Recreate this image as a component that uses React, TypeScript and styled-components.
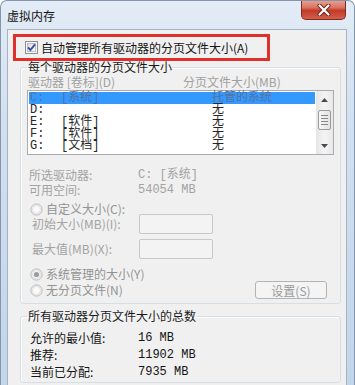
import React from 'react';
import styled, { createGlobalStyle } from 'styled-components';

const GlobalStyle = createGlobalStyle`
  html, body {
    margin: 0;
    padding: 0;
    background: #ffffff;
  }
  body {
    font-family: "Noto Sans CJK SC", "Noto Sans", sans-serif;
    font-size: 12px;
  }
`;

const Window = styled.div`
  box-sizing: border-box;
  width: 355px;
  height: 385px;
  overflow: hidden;
  display: flex;
  flex-direction: column;
  border: 1px solid #8396ae;
  border-bottom: none;
  border-radius: 7px 7px 0 0;
  background: linear-gradient(180deg, #e3ecf6 0%, #d3e0ef 30%, #c2d5ea 100%);
`;

const TitleBar = styled.div`
  height: 28px;
  flex: none;
  display: flex;
  align-items: flex-start;
  padding-left: 6px;
`;

const Title = styled.span`
  align-self: center;
  font-size: 12px;
  line-height: 14px;
  color: #111;
  margin-top: 1px;
`;

const CloseButton = styled.div`
  margin-left: auto;
  margin-right: 8px;
  margin-top: -1px;
  width: 45px;
  height: 20px;
  box-sizing: border-box;
  border: 1px solid #7d2a1f;
  border-top: none;
  border-radius: 0 0 5px 5px;
  background: linear-gradient(180deg, #eaa597 0%, #d9735f 40%, #c4382a 55%, #d2604a 100%);
  display: flex;
  align-items: center;
  justify-content: center;
`;

const Content = styled.div`
  flex: 1;
  margin: 0 7px 0 6px;
  background: #f0f0f0;
  border: 1px solid #a3b4c8;
  border-bottom: none;
  display: flex;
  flex-direction: column;
  align-items: flex-start;
`;

const Highlight = styled.div`
  box-sizing: border-box;
  margin: 4px 0 0 5px;
  width: 257px;
  height: 27px;
  border: 3px solid #e0302c;
  display: flex;
  align-items: center;
  gap: 3px;
  padding-left: 9px;
  position: relative;
  z-index: 1;
`;

const Label = styled.span<{ $tone?: 'dark' | 'mid' | 'light' }>`
  font-size: 12px;
  line-height: 14px;
  white-space: nowrap;
  color: ${(p) => (p.$tone === 'light' ? '#a3a3a3' : p.$tone === 'mid' ? '#939393' : '#141414')};
`;

const Group = styled.fieldset<{ $top: number }>`
  box-sizing: border-box;
  width: 321px;
  margin: ${(p) => p.$top}px 0 0 12px;
  padding: 0;
  border: 1px solid #d5dfe5;
  border-radius: 3px;
  box-shadow: inset 1px 1px 0 #ffffff;
  min-width: 0;
`;

const Legend = styled.legend`
  margin-left: 6px;
  padding: 0 1px;
  font-size: 12px;
  line-height: 14px;
  color: #1a1a1a;
`;

const HeaderRow = styled.div`
  display: grid;
  grid-template-columns: 155px 1fr;
  margin-top: 1px;
  padding-left: 7px;
  height: 14px;
  color: #a0a0a0;
  line-height: 14px;
`;

const ListBox = styled.div`
  box-sizing: border-box;
  margin: 1px 0 0 6px;
  width: 307px;
  height: 65px;
  border: 1px solid #a8abb2;
  background: #ffffff;
  display: flex;
`;

const Items = styled.div`
  flex: 1;
  padding-top: 1px;
  display: flex;
  flex-direction: column;
`;

const Row = styled.div<{ $selected?: boolean }>`
  display: grid;
  grid-template-columns: 31px 151px 1fr;
  margin-left: 1px;
  width: 286px;
  height: 12px;
  padding-left: 1px;
  box-sizing: border-box;
  font-family: "Liberation Mono", "Noto Sans CJK SC", monospace;
  font-size: 12px;
  line-height: 12px;
  white-space: nowrap;
  background: ${(p) => (p.$selected ? '#3399ff' : 'transparent')};
  color: ${(p) => (p.$selected ? '#55719e' : '#262626')};
`;

const ScrollBar = styled.div`
  width: 17px;
  flex: none;
  background: linear-gradient(90deg, #e6e6e6, #f3f3f3 50%, #e8e8e8);
  display: flex;
  flex-direction: column;
  align-items: center;
`;

const ArrowCell = styled.div`
  height: 17px;
  width: 17px;
  display: flex;
  align-items: center;
  justify-content: center;
`;

const Thumb = styled.div`
  box-sizing: border-box;
  margin-top: 2px;
  width: 13px;
  height: 20px;
  border: 1px solid #9c9c9c;
  border-radius: 2px;
  background: linear-gradient(90deg, #f7f7f7, #e2e2e2);
  display: flex;
  flex-direction: column;
  align-items: center;
  justify-content: center;
  gap: 2px;
`;

const Grip = styled.div`
  width: 7px;
  height: 1px;
  background: #8a8a8a;
`;

const Spacer = styled.div`
  flex: 1;
`;

const InfoGrid = styled.div<{ $top: number; $pad: number; $col: number; $line: number }>`
  display: grid;
  grid-template-columns: ${(p) => p.$col}px 1fr;
  grid-auto-rows: ${(p) => p.$line}px;
  align-items: center;
  margin-top: ${(p) => p.$top}px;
  padding-left: ${(p) => p.$pad}px;
`;

const Value = styled.span<{ $dim?: boolean }>`
  font-family: "Liberation Mono", "Noto Sans CJK SC", monospace;
  font-size: 12px;
  line-height: 14px;
  white-space: nowrap;
  color: ${(p) => (p.$dim ? '#a3a3a3' : '#141414')};
`;

const RadioRow = styled.div<{ $top: number }>`
  display: flex;
  align-items: center;
  gap: 3px;
  margin-top: ${(p) => p.$top}px;
  padding-left: 9px;
  padding-right: 13px;
  min-height: 13px;
`;

const SizeRow = styled.div<{ $top: number }>`
  display: grid;
  grid-template-columns: 107px 74px;
  align-items: center;
  margin-top: ${(p) => p.$top}px;
  padding-left: 11px;
  height: 20px;
`;

const SizeInput = styled.div`
  box-sizing: border-box;
  width: 74px;
  height: 20px;
  border: 1px solid #c8c8c8;
  border-radius: 2px;
  background: #f3f3f3;
`;

const Button = styled.div`
  box-sizing: border-box;
  margin-left: auto;
  width: 72px;
  height: 18px;
  border: 1px solid #b3b3b3;
  border-radius: 3px;
  background: #f4f4f4;
  color: #9a9a9a;
  font-size: 12px;
  display: flex;
  align-items: center;
  justify-content: center;
`;

const Checkbox = (): JSX.Element => (
  <svg width="13" height="13" viewBox="0 0 13 13">
    <defs>
      <linearGradient id="cbfill" x1="0" y1="0" x2="1" y2="1">
        <stop offset="0" stopColor="#dcdcdc" />
        <stop offset="1" stopColor="#ffffff" />
      </linearGradient>
    </defs>
    <rect x="0.5" y="0.5" width="12" height="12" fill="#f6f6f6" stroke="#8e8f8f" />
    <rect x="2.5" y="2.5" width="8" height="8" fill="url(#cbfill)" stroke="#b9bdc4" />
    <path d="M3 6.3 L5.4 9 L10 3.3" fill="none" stroke="#3c4ea5" strokeWidth="1.9" />
  </svg>
);

const Radio = ({ checked }: { checked?: boolean }): JSX.Element => (
  <svg width="13" height="13" viewBox="0 0 13 13">
    <circle cx="6.5" cy="6.5" r="5.6" fill="#f2f2f2" stroke="#b9b9b9" />
    <circle cx="6.5" cy="6.5" r="4" fill="#fafafa" stroke="#e0e0e0" />
    {checked && <circle cx="6.5" cy="6.5" r="2.6" fill="#9c9c9c" />}
  </svg>
);

const Arrow = ({ up }: { up?: boolean }): JSX.Element => (
  <svg width="7" height="4" viewBox="0 0 7 4">
    <path d={up ? 'M0 4 L3.5 0 L7 4 Z' : 'M0 0 L3.5 4 L7 0 Z'} fill="#4a4a4a" />
  </svg>
);

const CloseIcon = (): JSX.Element => (
  <svg width="14" height="12" viewBox="0 0 14 12">
    <path d="M2.5 1.5 L11.5 10.5 M11.5 1.5 L2.5 10.5" stroke="#6a2218" strokeWidth="4" strokeLinecap="round" />
    <path d="M2.5 1.5 L11.5 10.5 M11.5 1.5 L2.5 10.5" stroke="#ffffff" strokeWidth="2.2" strokeLinecap="round" />
  </svg>
);

interface Drive {
  letter: string;
  label: string;
  size: string;
}

const drives: Drive[] = [
  { letter: 'C:', label: '[系统]', size: '托管的系统' },
  { letter: 'D:', label: '', size: '无' },
  { letter: 'E:', label: '[软件]', size: '无' },
  { letter: 'F:', label: '[软件]', size: '无' },
  { letter: 'G:', label: '[文档]', size: '无' },
];

const totals = [
  { label: '允许的最小值:', value: '16 MB' },
  { label: '推荐:', value: '11902 MB' },
  { label: '当前已分配:', value: '7935 MB' },
];

const App = (): JSX.Element => (
  <>
    <GlobalStyle />
    <Window>
      <TitleBar>
        <Title>虚拟内存</Title>
        <CloseButton><CloseIcon /></CloseButton>
      </TitleBar>
      <Content>
        <Highlight>
          <Checkbox />
          <Label>自动管理所有驱动器的分页文件大小(A)</Label>
        </Highlight>

        <Group $top={-1}>
          <Legend>每个驱动器的分页文件大小</Legend>
          <HeaderRow>
            <span>驱动器 [卷标](D)</span>
            <span>分页文件大小(MB)</span>
          </HeaderRow>
          <ListBox>
            <Items>
              {drives.map((d, i) => (
                <Row key={d.letter} $selected={i === 0}>
                  <span>{d.letter}</span>
                  <span>{d.label}</span>
                  <span>{d.size}</span>
                </Row>
              ))}
            </Items>
            <ScrollBar>
              <ArrowCell><Arrow up /></ArrowCell>
              <Thumb>
                <Grip />
                <Grip />
                <Grip />
                <Grip />
              </Thumb>
              <Spacer />
              <ArrowCell><Arrow /></ArrowCell>
            </ScrollBar>
          </ListBox>

          <InfoGrid $top={12} $pad={8} $col={109} $line={15}>
            <Label $tone="light">所选驱动器:</Label>
            <Value $dim>C:  [系统]</Value>
            <Label $tone="light">可用空间:</Label>
            <Value $dim>54054 MB</Value>
          </InfoGrid>

          <RadioRow $top={5}>
            <Radio />
            <Label $tone="mid">自定义大小(C):</Label>
          </RadioRow>
          <SizeRow $top={-2}>
            <Label $tone="light">初始大小(MB)(I):</Label>
            <SizeInput />
          </SizeRow>
          <SizeRow $top={5}>
            <Label $tone="light">最大值(MB)(X):</Label>
            <SizeInput />
          </SizeRow>
          <RadioRow $top={8}>
            <Radio checked />
            <Label $tone="mid">系统管理的大小(Y)</Label>
          </RadioRow>
          <RadioRow $top={0} style={{ paddingBottom: 4 }}>
            <Radio />
            <Label $tone="mid">无分页文件(N)</Label>
            <Button>设置(S)</Button>
          </RadioRow>
        </Group>

        <Group $top={5}>
          <Legend>所有驱动器分页文件大小的总数</Legend>
          <InfoGrid $top={6} $pad={9} $col={108} $line={17} style={{ paddingBottom: 2 }}>
            {totals.map((t) => (
              <React.Fragment key={t.label}>
                <Label>{t.label}</Label>
                <Value>{t.value}</Value>
              </React.Fragment>
            ))}
          </InfoGrid>
        </Group>
      </Content>
    </Window>
  </>
);

export default App;
